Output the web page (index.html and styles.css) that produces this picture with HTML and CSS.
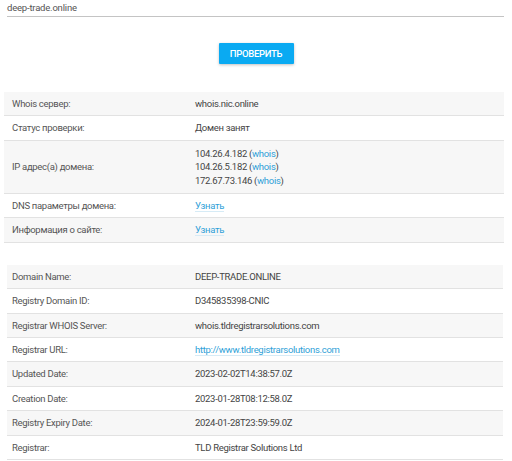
FILE: index.html
```html
<!DOCTYPE html>
<html>
<head>
<meta charset="utf-8">
<link rel="stylesheet" href="styles.css">
</head>
<body>
<div class="page">
  <div class="field">deep-trade.online</div>
  <div class="actions"><button class="btn">ПРОВЕРИТЬ</button></div>
  <table class="info t1">
    <tr><td class="k">Whois сервер:</td><td>whois.nic.online</td></tr>
    <tr><td class="k">Статус проверки:</td><td>Домен занят</td></tr>
    <tr class="ip"><td class="k">IP адрес(а) домена:</td><td>104.26.4.182 (<a>whois</a>)<br>104.26.5.182 (<a>whois</a>)<br>172.67.73.146 (<a>whois</a>)</td></tr>
    <tr><td class="k">DNS параметры домена:</td><td><a class="u">Узнать</a></td></tr>
    <tr><td class="k">Информация о сайте:</td><td><a class="u">Узнать</a></td></tr>
  </table>
  <table class="info t2">
    <tr><td class="k">Domain Name:</td><td>DEEP-TRADE.ONLINE</td></tr>
    <tr><td class="k">Registry Domain ID:</td><td>D345835398-CNIC</td></tr>
    <tr><td class="k">Registrar WHOIS Server:</td><td>whois.tldregistrarsolutions.com</td></tr>
    <tr><td class="k">Registrar URL:</td><td><a class="u">http://www.tldregistrarsolutions.com</a></td></tr>
    <tr><td class="k">Updated Date:</td><td>2023-02-02T14:38:57.0Z</td></tr>
    <tr><td class="k">Creation Date:</td><td>2023-01-28T08:12:58.0Z</td></tr>
    <tr><td class="k">Registry Expiry Date:</td><td>2024-01-28T23:59:59.0Z</td></tr>
    <tr><td class="k">Registrar:</td><td>TLD Registrar Solutions Ltd</td></tr>
  </table>
</div>
</body>
</html>
```
FILE: styles.css
```css
html, body { margin: 0; padding: 0; background: #fff; }
body { font-family: Roboto, "Noto Sans", sans-serif; color: #444; font-size: 9.5px; }
.page { padding: 0 8px 0 4px; }
.field {
  margin: 0 0 0 3px;
  height: 16px;
  line-height: 15px;
  border-bottom: 1px solid #c4c4c4;
  color: #555;
  font-size: 9.5px;
  letter-spacing: -0.2px;
}
.actions { display: flex; justify-content: center; padding: 26px 0 28px; margin-left: 4px; }
.btn {
  width: 75px; height: 21px;
  background: #0aaaf2;
  color: #fff;
  border: none;
  border-radius: 1px;
  font-family: Roboto, sans-serif;
  font-weight: 500;
  font-size: 9.5px;
  letter-spacing: -0.3px;
  box-shadow: 0 1px 3px rgba(0,0,0,0.25);
  padding: 0;
}
.info { border-collapse: collapse; letter-spacing: -0.3px; table-layout: fixed; }
.t1 { width: 500px; }
.t2 { width: 496px; margin: 22px 0 0 3px; }
.info td {
  padding: 5px 8px;
  line-height: 13.4px;
  border-bottom: 1px solid #e2e2e2;
  vertical-align: middle;
  color: #444;
}
.info tr.ip td { padding-top: 6px; padding-bottom: 6px; }
.t2 td { padding-left: 5px; }
.info td.k { width: 167px; color: #555; }
.t2 td.k { width: 170px; }
.info tr:nth-child(odd) td { background: #f7f7f7; }
a { color: #2f9fd8; }
a.u { text-decoration: none; border-bottom: 1px solid #d6ebf6; }
```
